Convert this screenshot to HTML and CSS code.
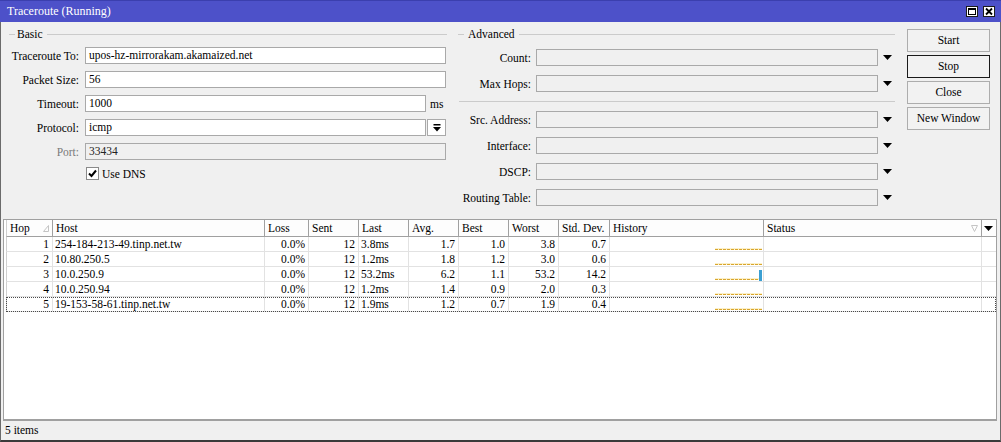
FILE: index.html
```html
<!DOCTYPE html>
<html lang="en">
<head>
  <meta charset="UTF-8">
  <title>Traceroute (Running)</title>
  <link rel="stylesheet" href="styles.css">
</head>
<body>

<div class="window">
  <div class="titlebar">
    <span class="title">Traceroute (Running)</span>
    <span class="tb-btn">
      <svg width="10" height="9" viewBox="0 0 10 9"><rect x="1.5" y="1.5" width="7" height="6" fill="none" stroke="#000"/><rect x="1" y="1" width="8" height="2" fill="#000"/></svg>
    </span>
    <span class="tb-btn">
      <svg width="10" height="9" viewBox="0 0 10 9"><path d="M2 1.5 L8 7.5 M8 1.5 L2 7.5" stroke="#000" stroke-width="1.8"/></svg>
    </span>
  </div>

  <div class="top">
    <!-- Basic -->
    <div class="group basic">
      <div class="legend">Basic</div>
      <div class="rows">
        <div class="row"><label>Traceroute To:</label><div class="field">upos-hz-mirrorakam.akamaized.net</div></div>
        <div class="row"><label>Packet Size:</label><div class="field">56</div></div>
        <div class="row"><label>Timeout:</label><div class="field">1000</div><span class="unit">ms</span></div>
        <div class="row">
          <label>Protocol:</label><div class="field">icmp</div>
          <span class="dd-btn">
            <svg width="8" height="8" viewBox="0 0 8 8"><rect x="0.5" y="0" width="7" height="1.5" fill="#000"/><polygon points="0,3 8,3 4,7.5" fill="#000"/></svg>
          </span>
        </div>
        <div class="row disabled"><label>Port:</label><div class="field">33434</div></div>
        <div class="check-row">
          <span class="checkbox">
            <svg width="11" height="11" viewBox="0 0 11 11"><polyline points="2,5.5 4.5,8 9,2.5" fill="none" stroke="#000" stroke-width="2"/></svg>
          </span>
          <span>Use DNS</span>
        </div>
      </div>
    </div>

    <!-- Advanced -->
    <div class="group advanced">
      <div class="legend">Advanced</div>
      <div class="rows">
        <div class="row"><label>Count:</label><div class="field"></div><span class="arrow"><svg width="9" height="5" viewBox="0 0 9 5"><polygon points="0,0 9,0 4.5,5" fill="#000"/></svg></span></div>
        <div class="row"><label>Max Hops:</label><div class="field"></div><span class="arrow"><svg width="9" height="5" viewBox="0 0 9 5"><polygon points="0,0 9,0 4.5,5" fill="#000"/></svg></span></div>
        <div class="sep"></div>
        <div class="row"><label>Src. Address:</label><div class="field"></div><span class="arrow"><svg width="9" height="5" viewBox="0 0 9 5"><polygon points="0,0 9,0 4.5,5" fill="#000"/></svg></span></div>
        <div class="row"><label>Interface:</label><div class="field"></div><span class="arrow"><svg width="9" height="5" viewBox="0 0 9 5"><polygon points="0,0 9,0 4.5,5" fill="#000"/></svg></span></div>
        <div class="row"><label>DSCP:</label><div class="field"></div><span class="arrow"><svg width="9" height="5" viewBox="0 0 9 5"><polygon points="0,0 9,0 4.5,5" fill="#000"/></svg></span></div>
        <div class="row"><label>Routing Table:</label><div class="field"></div><span class="arrow"><svg width="9" height="5" viewBox="0 0 9 5"><polygon points="0,0 9,0 4.5,5" fill="#000"/></svg></span></div>
      </div>
    </div>

    <div class="buttons">
      <div class="btn">Start</div>
      <div class="btn default">Stop</div>
      <div class="btn">Close</div>
      <div class="btn">New Window</div>
    </div>
  </div>

  <!-- hops table -->
  <div class="grid">
    <div class="thead cols">
      <div class="th sort">Hop<svg width="6" height="7" viewBox="0 0 6 7"><path d="M0.5 6.5 L5.5 0.5 L5.5 6.5 Z" fill="none" stroke="#c4c4c4"/></svg></div>
      <div class="th">Host</div>
      <div class="th">Loss</div>
      <div class="th">Sent</div>
      <div class="th">Last</div>
      <div class="th">Avg.</div>
      <div class="th">Best</div>
      <div class="th">Worst</div>
      <div class="th">Std. Dev.</div>
      <div class="th">History</div>
      <div class="th sort">Status<svg width="7" height="7" viewBox="0 0 7 7"><path d="M0.5 0.5 L6.5 0.5 L3.5 6.5 Z" fill="none" stroke="#c4c4c4"/></svg></div>
      <div class="th menu"><svg width="9" height="5" viewBox="0 0 9 5"><polygon points="0,0 9,0 4.5,5" fill="#000"/></svg></div>
    </div>

    <div class="tr cols">
      <div class="num">1</div><div>254-184-213-49.tinp.net.tw</div><div class="num">0.0%</div><div class="num">12</div><div>3.8ms</div>
      <div class="num">1.7</div><div class="num">1.0</div><div class="num">3.8</div><div class="num">0.7</div>
      <div class="hist"><span class="spark"></span></div><div></div><div></div>
    </div>
    <div class="tr cols">
      <div class="num">2</div><div>10.80.250.5</div><div class="num">0.0%</div><div class="num">12</div><div>1.2ms</div>
      <div class="num">1.8</div><div class="num">1.2</div><div class="num">3.0</div><div class="num">0.6</div>
      <div class="hist"><span class="spark"></span></div><div></div><div></div>
    </div>
    <div class="tr cols">
      <div class="num">3</div><div>10.0.250.9</div><div class="num">0.0%</div><div class="num">12</div><div>53.2ms</div>
      <div class="num">6.2</div><div class="num">1.1</div><div class="num">53.2</div><div class="num">14.2</div>
      <div class="hist"><span class="spark short"></span><span class="bar"></span></div><div></div><div></div>
    </div>
    <div class="tr cols">
      <div class="num">4</div><div>10.0.250.94</div><div class="num">0.0%</div><div class="num">12</div><div>1.2ms</div>
      <div class="num">1.4</div><div class="num">0.9</div><div class="num">2.0</div><div class="num">0.3</div>
      <div class="hist"><span class="spark"></span></div><div></div><div></div>
    </div>
    <div class="tr cols focused">
      <div class="num">5</div><div>19-153-58-61.tinp.net.tw</div><div class="num">0.0%</div><div class="num">12</div><div>1.9ms</div>
      <div class="num">1.2</div><div class="num">0.7</div><div class="num">1.9</div><div class="num">0.4</div>
      <div class="hist"><span class="spark"></span></div><div></div><div></div>
    </div>
  </div>

  <div class="statusbar">5 items</div>
</div>

</body>
</html>
```

FILE: styles.css
```css
* {
  box-sizing: border-box;
}

body {
  margin: 0;
  font-family: "Liberation Serif", "Times New Roman", serif;
  font-size: 11.5px;
  color: #000;
  background: #fff;
}

.window {
  width: 1001px;
  height: 442px;
  display: flex;
  flex-direction: column;
  background: #f0f0f0;
  border-left: 1px solid #6b6b6b;
  border-right: 1px solid #6b6b6b;
  border-bottom: 2px solid #3a3a3a;
}

/* title bar */
.titlebar {
  height: 22px;
  margin: 0 -1px;
  padding: 0 6px 0 7px;
  display: flex;
  align-items: center;
  background: #4d51c9;
  border-top: 1px solid #3b3fae;
  color: #fff;
  font-size: 12px;
}

.title {
  flex: 1;
}

.tb-btn {
  width: 12px;
  height: 11px;
  margin-left: 5px;
  display: flex;
  align-items: center;
  justify-content: center;
  background: #fff;
  border: 1px solid #1c1c1c;
}

/* top part: two groups and buttons */
.top {
  display: flex;
  padding: 5px 0 0 2px;
}

.basic {
  width: 444px;
}

.advanced {
  width: 439px;
  margin-left: 9px;
}

.legend {
  height: 14px;
  display: flex;
  align-items: center;
  white-space: nowrap;
}

.legend::before {
  content: "";
  width: 6px;
  border-top: 1px solid #cbcbcb;
}

.legend::after {
  content: "";
  flex: 1;
  margin-left: 4px;
  border-top: 1px solid #cbcbcb;
}

.basic .legend::before {
  margin: 0 2px 0 6px;
}

.advanced .legend::before {
  margin: 0 4px 0 2px;
}

.rows {
  display: flex;
  flex-direction: column;
}

.basic .rows {
  margin-top: 6px;
  gap: 7px;
}

.advanced .rows {
  margin-top: 8px;
  gap: 9px;
}

.row {
  height: 17px;
  display: flex;
  align-items: center;
}

.row label {
  white-space: nowrap;
  text-align: right;
}

.basic .row {
  margin-right: 1px;
}

.basic .row label {
  width: 76px;
  margin-right: 6px;
}

.advanced .row label {
  width: 75px;
  margin-right: 5px;
}

.field {
  flex: 1;
  height: 17px;
  padding-left: 3px;
  line-height: 15px;
  background: #fff;
  border: 1px solid #a9a9a9;
  white-space: nowrap;
  overflow: hidden;
}

.advanced .field {
  flex: none;
  width: 342px;
  background: #f0f0f0;
}

.row.disabled label {
  color: #7a7a7a;
}

.row.disabled .field {
  background: #f0f0f0;
  color: #222;
}

.unit {
  width: 20px;
  padding-left: 4px;
}

.dd-btn {
  width: 19px;
  height: 17px;
  margin-left: 1px;
  display: flex;
  align-items: center;
  justify-content: center;
  background: #fff;
  border: 1px solid #a9a9a9;
}

.arrow {
  width: 17px;
  display: flex;
  justify-content: center;
  padding-left: 1px;
}

.sep {
  height: 1px;
  margin-left: 3px;
  background: #cbcbcb;
}

.check-row {
  height: 13px;
  padding-left: 83px;
  display: flex;
  align-items: center;
}

.checkbox {
  width: 13px;
  height: 13px;
  margin-right: 3px;
  display: flex;
  align-items: center;
  justify-content: center;
  background: #fff;
  border: 1px solid #8a8a8a;
}

.buttons {
  width: 83px;
  margin-left: 12px;
  padding-top: 2px;
  display: flex;
  flex-direction: column;
  gap: 3px;
}

.btn {
  height: 23px;
  line-height: 21px;
  text-align: center;
  background: #f2f2f2;
  border: 1px solid #adadad;
}

.btn.default {
  border-color: #1a1a1a;
}

/* hops table */
.grid {
  flex: 1;
  margin: 13px 3px 0 2px;
  padding-left: 2px;
  background: #fff;
  border: 1px solid #a0a0a0;
  border-bottom-width: 2px;
}

.cols {
  display: grid;
  grid-template-columns: 46px 212px 44px 50px 50px 50px 50px 50px 51px 154px 218px 13px;
  border-left: 1px solid #cfcfcf;
}

.thead {
  height: 17px;
  background: #fdfdfd;
  border-bottom: 1px solid #a0a0a0;
}

.th {
  padding-left: 3px;
  line-height: 16px;
  border-right: 1px solid #a0a0a0;
  white-space: nowrap;
}

.th.sort {
  display: flex;
  align-items: center;
  justify-content: space-between;
  padding-right: 3px;
}

.th.menu {
  display: flex;
  align-items: center;
  justify-content: center;
  padding: 0;
  border-right: none;
}

.tr {
  height: 15px;
  line-height: 14px;
  border-bottom: 1px solid #e2e2e2;
}

.tr > div {
  padding-left: 2px;
  border-right: 1px solid #e2e2e2;
  white-space: nowrap;
  overflow: hidden;
}

.tr > div:last-child {
  border-right: none;
}

.tr > .num {
  padding: 0 3px 0 0;
  text-align: right;
}

.tr.focused {
  outline: 1px dotted #4a4a4a;
  outline-offset: -1px;
}

.tr > .hist {
  display: flex;
  justify-content: flex-end;
  align-items: flex-end;
  padding: 0 1px 0 0;
}

.spark {
  width: 47px;
  height: 2px;
  margin-bottom: 1px;
  border-top: 1px solid #fbf0c9;
  background: repeating-linear-gradient(to right, #d9a62e 0 3px, #fff3cf 3px 4px);
  background-clip: content-box;
}

.spark.short {
  width: 44px;
}

.bar {
  width: 3px;
  height: 11px;
  background: #3b9fd2;
}

.statusbar {
  height: 19px;
  padding-left: 4px;
  line-height: 19px;
}
```
